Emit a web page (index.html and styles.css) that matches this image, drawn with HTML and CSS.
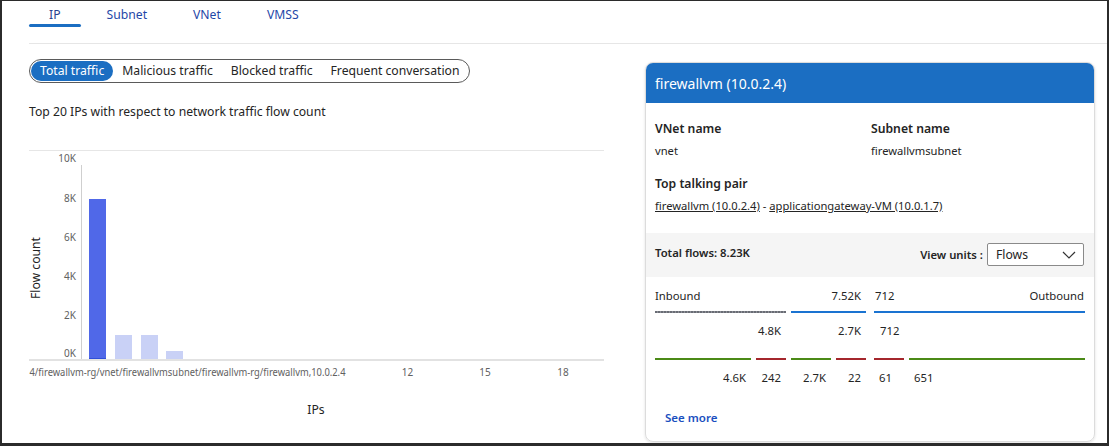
FILE: index.html
```html
<!DOCTYPE html>
<html>
<head>
<meta charset="utf-8">
<link rel="stylesheet" href="styles.css">
</head>
<body>
<div class="frame">
  <nav class="tabs">
    <div class="tab active">IP</div>
    <div class="tab">Subnet</div>
    <div class="tab">VNet</div>
    <div class="tab">VMSS</div>
  </nav>
  <div class="content">
    <section class="left">
      <div class="pills">
        <span class="pill on">Total traffic</span>
        <span class="pill">Malicious traffic</span>
        <span class="pill">Blocked traffic</span>
        <span class="pill">Frequent conversation</span>
      </div>
      <p class="caption">Top 20 IPs with respect to network traffic flow count</p>
      <svg class="chart" width="585" height="300" viewBox="0 0 585 300">
        <g transform="translate(10,0)">
          <line x1="0" y1="10.5" x2="575" y2="10.5" stroke="#e6e6e6" stroke-width="1"/>
          <g class="ylab" text-anchor="end">
            <text x="47" y="21.5">10K</text>
            <text x="47" y="61.5">8K</text>
            <text x="47" y="100.5">6K</text>
            <text x="47" y="139.5">4K</text>
            <text x="47" y="178.5">2K</text>
            <text x="47" y="216.5">0K</text>
          </g>
          <line x1="52.5" y1="25" x2="52.5" y2="219" stroke="#cfcfcf" stroke-width="1"/>
          <rect x="60" y="59" width="17" height="160" fill="#5068e8"/>
          <rect x="60" y="218" width="17" height="1" fill="#2f4fd8"/>
          <rect x="86" y="195" width="17" height="24" fill="#c9d1f6"/>
          <rect x="112" y="195" width="17" height="24" fill="#c9d1f6"/>
          <rect x="137" y="211" width="17" height="8" fill="#c9d1f6"/>
          <rect x="0" y="219" width="575" height="2" fill="#e2e2e2"/>
          <g class="xlab">
            <text x="0.5" y="235.5" textLength="316" lengthAdjust="spacingAndGlyphs">4/firewallvm-rg/vnet/firewallvmsubnet/firewallvm-rg/firewallvm,10.0.2.4</text>
            <text x="378.5" y="235.5" text-anchor="middle">12</text>
            <text x="456" y="235.5" text-anchor="middle">15</text>
            <text x="534" y="235.5" text-anchor="middle">18</text>
          </g>
          <text class="axt" x="6.5" y="128" text-anchor="middle" dominant-baseline="central" transform="rotate(-90 6.5 128)">Flow count</text>
          <text class="axt" x="287" y="269" text-anchor="middle" dominant-baseline="central">IPs</text>
        </g>
      </svg>
    </section>
    <aside class="card">
      <header class="card-head">firewallvm (10.0.2.4)</header>
      <div class="info">
        <div class="grid2">
          <div>
            <div class="lbl">VNet name</div>
            <div class="val">vnet</div>
          </div>
          <div>
            <div class="lbl">Subnet name</div>
            <div class="val">firewallvmsubnet</div>
          </div>
        </div>
        <div class="lbl mt">Top talking pair</div>
        <div class="val"><a class="lnk">firewallvm (10.0.2.4)</a> - <a class="lnk">applicationgateway-VM (10.0.1.7)</a></div>
      </div>
      <div class="band">
        <span class="total">Total flows: 8.23K</span>
        <div class="units">
          <span class="ulbl">View units :</span>
          <div class="select">
            <span>Flows</span>
            <svg width="14" height="8" viewBox="0 0 14 8"><path d="M1 1 L7 7 L13 1" fill="none" stroke="#333" stroke-width="1.2"/></svg>
          </div>
        </div>
      </div>
      <div class="flows">
        <div class="fhead">
          <div class="fin"><span>Inbound</span><span>7.52K</span></div>
          <div class="fout"><span>712</span><span>Outbound</span></div>
        </div>
        <div class="cols">
          <div class="col ca">
            <div class="bar dashed"></div>
            <div class="num r">4.8K</div>
            <div class="sub">
              <div class="seg s96"><div class="bar green"></div><div class="num r">4.6K</div></div>
              <div class="seg s30"><div class="bar red"></div><div class="num r">242</div></div>
            </div>
          </div>
          <div class="col cb">
            <div class="bar blue"></div>
            <div class="num r">2.7K</div>
            <div class="sub">
              <div class="seg s40"><div class="bar green"></div><div class="num r">2.7K</div></div>
              <div class="seg s30"><div class="bar red"></div><div class="num r">22</div></div>
            </div>
          </div>
          <div class="col cc">
            <div class="bar blue"></div>
            <div class="num l">712</div>
            <div class="sub">
              <div class="seg s30"><div class="bar red"></div><div class="num l">61</div></div>
              <div class="seg grow"><div class="bar green"></div><div class="num l">651</div></div>
            </div>
          </div>
        </div>
        <a class="more">See more</a>
      </div>
    </aside>
  </div>
</div>
</body>
</html>
```
FILE: styles.css
```css
* { box-sizing: border-box; }
html, body { margin: 0; padding: 0; background: #fff; }
body { font-family: "Noto Sans", "Open Sans", sans-serif; color: #242424; }

.frame {
  width: 1109px;
  height: 446px;
  border-style: solid;
  border-color: #2b2b2b;
  border-width: 1px 2px 3px 2px;
  overflow: hidden;
  padding-left: 27px;
}

.tabs {
  display: flex;
  gap: 6px;
  height: 43px;
  border-bottom: 1px solid #e6e6e6;
}
.tab {
  position: relative;
  padding: 5px 20px 0;
  font-size: 12.2px;
  line-height: 18px;
  color: #1f47a8;
}
.tab.active { color: #2a3f8f; }
.tab.active::after {
  content: "";
  position: absolute;
  left: 0; right: 0;
  top: 23px;
  height: 3px;
  border-radius: 2px;
  background: #1b6ec2;
}

.content { display: flex; }

.left { width: 575px; margin-right: 41px; }

.pills {
  display: inline-flex;
  margin-top: 15px;
  border: 1px solid #5a5a5a;
  border-radius: 13px;
  padding: 1px;
}
.pill {
  padding: 0 9px;
  font-size: 12.2px;
  line-height: 20px;
  border-radius: 11px;
  color: #242424;
  white-space: nowrap;
}
.pill.on { background: #1b6ec2; color: #fff; }

.caption {
  margin: 20px 0 19px;
  font-size: 12.2px;
  line-height: 18px;
  color: #242424;
}

.chart { display: block; overflow: hidden; margin-left: -10px; }
.ylab text, .xlab text { font-size: 10px; fill: #616161; font-family: "Noto Sans", sans-serif; }
.axt { font-size: 12.2px; fill: #242424; font-family: "Noto Sans", sans-serif; }

.card {
  width: 450px;
  height: 380px;
  margin-top: 18px;
  border: 1px solid #dcdcdc;
  border-radius: 8px;
  box-shadow: 0 1px 3px rgba(0,0,0,0.12);
  overflow: hidden;
}
.card-head {
  height: 40px;
  background: #1b6ec2;
  color: #fff;
  font-size: 14px;
  line-height: 42px;
  padding: 0 9px;
}
.info { padding: 17px 9px 19px; }
.grid2 { display: grid; grid-template-columns: 216px 1fr; }
.lbl { font-size: 12.2px; line-height: 18px; font-weight: 600; color: #242424; }
.val { font-size: 11.2px; line-height: 16px; margin-top: 5px; color: #242424; }
.lbl.mt { margin-top: 16px; }
.lnk { text-decoration: underline; color: #242424; }

.band {
  height: 44px;
  background: #f5f5f5;
  padding: 10px 10px 0 9px;
  display: flex;
  justify-content: space-between;
  align-items: flex-start;
}
.total { font-size: 11.3px; line-height: 20px; font-weight: 600; }
.units { display: flex; align-items: center; gap: 4px; }
.ulbl { font-size: 11.3px; line-height: 20px; font-weight: 600; }
.select {
  width: 97px;
  height: 23px;
  border: 1px solid #8a8a8a;
  border-radius: 2px;
  background: #fff;
  display: flex;
  align-items: center;
  justify-content: space-between;
  padding: 0 7px 0 8px;
  font-size: 12.2px;
}

.flows { padding: 11px 9px 0; }
.fhead { display: flex; gap: 8px; font-size: 11.3px; line-height: 16px; }
.fin, .fout { width: 211px; display: flex; justify-content: space-between; }
.fin { padding-right: 5px; }
.fout { padding: 0 1px; }

.cols { display: flex; margin-top: 7px; }
.col { display: flex; flex-direction: column; }
.ca { width: 131px; margin-right: 5px; }
.cb { width: 75px; margin-right: 8px; }
.cc { width: 211px; }
.bar { height: 2px; }
.dashed { background: repeating-linear-gradient(90deg, #696c74 0 2px, #8d9098 2px 3px); }
.blue { background: #1a73d1; }
.green { background: #4b8a17; }
.red { background: #a4262c; }
.num { font-size: 11.3px; line-height: 16px; margin-top: 10px; }
.num.r { text-align: right; padding-right: 5px; }
.num.l { text-align: left; padding-left: 5px; }
.col > .num { margin-bottom: 19px; }
.sub { display: flex; gap: 5px; }
.seg { display: flex; flex-direction: column; }
.s96 { width: 96px; }
.s40 { width: 40px; }
.s30 { width: 30px; }
.grow { flex: 1; }
.cc > .num { padding-left: 6px; }

.more {
  display: inline-block;
  margin-top: 24px;
  margin-left: 10px;
  font-size: 11.5px;
  line-height: 16px;
  font-weight: 600;
  color: #1a4fbf;
}
```
